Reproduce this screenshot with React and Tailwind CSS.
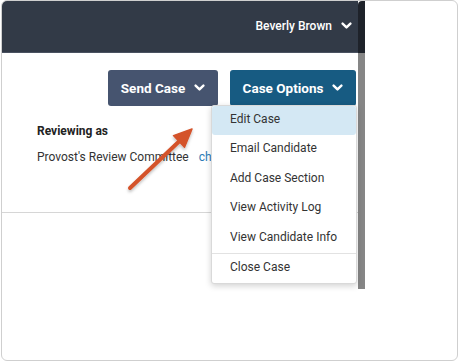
import React from "react";

function Chevron({ className = "" }) {
  return (
    <svg width="11" height="8" viewBox="0 0 11 8" className={className}>
      <path d="M1.6 1.6 L5.5 5.4 L9.4 1.6" fill="none" stroke="white" strokeWidth="2.4" strokeLinecap="round" strokeLinejoin="round" />
    </svg>
  );
}

const items = ["Edit Case", "Email Candidate", "Add Case Section", "View Activity Log", "View Candidate Info"];

export default function App() {
  return (
    <div className="w-[459px] h-[363px] bg-white relative font-['Roboto',sans-serif]">
      <div className="ml-[1px] w-[457px] h-[361px] border border-[#cfcfcf] rounded-[6px] overflow-hidden relative flex items-start bg-white">
        <div className="w-[356px] flex flex-col">
          <div className="h-[52px] bg-[#323a47] border-b border-[#4a5261] flex items-center justify-end pr-[6px] gap-[9px] pb-[1px]">
            <span className="text-white text-[12px] font-medium leading-none">Beverly Brown</span>
            <Chevron />
          </div>
          <div className="h-[236px] bg-white flex flex-col">
            <div className="mt-[17px] flex justify-end gap-[12px] pr-[2px]">
              <button className="h-[36px] w-[110px] rounded-[3px] bg-[#46546f] flex items-center justify-center gap-[9px] text-white font-bold text-[13.5px]">
                Send Case <Chevron />
              </button>
              <button className="h-[36px] w-[126px] rounded-[3px] bg-[#175b82] flex items-center justify-center gap-[9px] text-white font-bold text-[13.5px]">
                Case Options <Chevron />
              </button>
            </div>
            <div className="pl-[35px] mt-[17px] text-[12px] leading-[16px] font-bold text-[#222]">Reviewing as</div>
            <div className="pl-[35px] mt-[10px] text-[12px] leading-[16px] text-[#333] flex gap-[10px] whitespace-nowrap">
              <span>Provost's Review Committee</span>
              <span className="text-[#2b7bb6]">ch</span>
            </div>
            <div className="mt-[47px] border-t border-[#d6d6d6]" />
          </div>
        </div>
        <div className="w-[7px] flex flex-col">
          <div className="h-[52px] bg-[#1e222a] rounded-tl-[4px]" />
          <div className="h-[236px] bg-[#868686]" />
        </div>
        <div className="absolute left-[209px] top-[104px] w-[146px] bg-white border border-[#d9d9d9] rounded-[3px] shadow-[0_2px_6px_rgba(0,0,0,0.18)] flex flex-col text-[12px] text-[#333]">
          {items.map((t, i) => (
            <div
              key={t}
              className={
                i === 0
                  ? "h-[29px] flex items-center pl-[18px] pb-[3px] bg-[#d4e8f4] rounded-[3px]"
                  : "h-[29.5px] flex items-center pl-[18px] pb-[3px]"
              }
            >
              {t}
            </div>
          ))}
          <div className="border-t border-[#e2e2e2] h-[29.5px] flex items-center pl-[18px] pb-[3px]">Close Case</div>
        </div>
      </div>
      <svg className="absolute inset-0 pointer-events-none" width="459" height="363" viewBox="0 0 459 363">
        <defs>
          <filter id="sh" x="-20%" y="-20%" width="140%" height="140%">
            <feDropShadow dx="0" dy="2" stdDeviation="1.5" floodColor="#000" floodOpacity="0.25" />
          </filter>
        </defs>
        <g filter="url(#sh)" fill="#d4532b" stroke="#d4532b">
          <line x1="130" y1="188" x2="179" y2="141.5" strokeWidth="4" strokeLinecap="round" />
          <polygon points="192,129 173.5,135.6 184.5,147.2" strokeWidth="1.5" strokeLinejoin="round" />
        </g>
      </svg>
    </div>
  );
}
